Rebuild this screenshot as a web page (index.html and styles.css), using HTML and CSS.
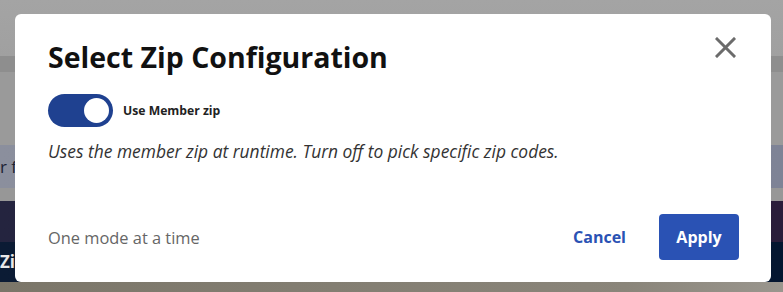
FILE: index.html
```html
<!DOCTYPE html>
<html lang="en">
<head>
    <meta charset="UTF-8">
    <meta name="viewport" content="width=device-width, initial-scale=1.0">
    <title>Select Zip Configuration</title>
    <link rel="stylesheet" href="styles.css">
</head>
<body>
    <div class="page">
        <div class="band band-top"></div>
        <div class="band band-bar"></div>
        <div class="band band-mid"></div>
        <div class="band band-filter"><span>r for zip</span></div>
        <div class="band band-gap"></div>
        <div class="band band-navy"></div>
        <div class="band band-deep"><span>Zip</span></div>
        <div class="band band-bottom"></div>
    </div>

    <div class="modal">
        <div class="modal-head">
            <h1>Select Zip Configuration</h1>
            <button class="close" aria-label="Close">
                <svg width="21" height="21" viewBox="0 0 21 21">
                    <path d="M2 2 L19 19 M19 2 L2 19" stroke="#6b6b6b" stroke-width="3" stroke-linecap="square"/>
                </svg>
            </button>
        </div>

        <div class="toggle-row">
            <span class="switch"><span class="knob"></span></span>
            <span class="toggle-label">Use Member zip</span>
        </div>
        <p class="hint">Uses the member zip at runtime. Turn off to pick specific zip codes.</p>

        <div class="modal-foot">
            <span class="note">One mode at a time</span>
            <div class="actions">
                <button class="btn-link">Cancel</button>
                <button class="btn-primary">Apply</button>
            </div>
        </div>
    </div>
</body>
</html>
```

FILE: styles.css
```css
html, body {
    margin: 0;
    padding: 0;
}
body {
    width: 783px;
    height: 292px;
    overflow: hidden;
    position: relative;
    font-family: "Open Sans", Arial, sans-serif;
}
.page {
    display: flex;
    flex-direction: column;
    height: 292px;
}
.band {
    flex: none;
    overflow: hidden;
    white-space: nowrap;
}
.band-top {
    height: 56px;
    background: linear-gradient(#a4a4a4, #a0a0a0);
}
.band-bar {
    height: 16px;
    background-color: #8e8e8e;
}
.band-mid {
    height: 73px;
    background-color: #9a9a9a;
}
.band-filter {
    height: 43px;
    background: linear-gradient(90deg, #8b8f9d, #7e8396);
    color: #1c2233;
    font-size: 17px;
    line-height: 43px;
}
.band-gap {
    height: 13px;
    background-color: #979797;
}
.band-navy {
    height: 41px;
    background: linear-gradient(90deg, #24243f, #2a1d3a);
}
.band-deep {
    height: 40px;
    background: linear-gradient(90deg, #0b1b34, #041630);
    color: #e8e8e8;
    font-size: 17px;
    font-weight: bold;
    line-height: 40px;
}
.band-bottom {
    height: 10px;
    background: linear-gradient(90deg, #7b7669, #8a857a 80%, #9a968e);
}

.modal {
    position: absolute;
    left: 15px;
    top: 14px;
    width: 756px;
    height: 268px;
    box-sizing: border-box;
    padding: 22px 32px 22px 33px;
    background-color: #fff;
    border-radius: 6px;
    display: flex;
    flex-direction: column;
}
.modal-head {
    display: flex;
    justify-content: space-between;
    align-items: flex-start;
}
h1 {
    margin: 2px 0 0;
    font-size: 28.5px;
    font-weight: 700;
    color: #111;
    line-height: 38px;
}
.close {
    background: none;
    border: none;
    padding: 0;
    margin: 1px 3px 0 0;
    cursor: pointer;
    line-height: 0;
}
.toggle-row {
    display: flex;
    align-items: center;
    gap: 10px;
    margin-top: 18px;
}
.switch {
    width: 65px;
    height: 33px;
    border-radius: 17px;
    background-color: #1f4190;
    position: relative;
    flex: none;
}
.knob {
    position: absolute;
    right: 4px;
    top: 4px;
    width: 25px;
    height: 25px;
    border-radius: 50%;
    background-color: #fff;
}
.toggle-label {
    font-size: 12.2px;
    font-weight: 700;
    color: #222;
}
.hint {
    margin: 12px 0 0;
    font-size: 17.4px;
    font-style: italic;
    color: #333;
}
.modal-foot {
    margin-top: auto;
    display: flex;
    justify-content: space-between;
    align-items: center;
}
.note {
    font-size: 16.4px;
    color: #666;
}
.actions {
    display: flex;
    align-items: center;
    gap: 33px;
}
.btn-link {
    background: none;
    border: none;
    padding: 0;
    font-family: "Open Sans", Arial, sans-serif;
    font-size: 16px;
    font-weight: 700;
    color: #2a52b4;
    cursor: pointer;
}
.btn-primary {
    background-color: #2a52b4;
    color: #fff;
    border: none;
    border-radius: 4px;
    width: 80px;
    height: 46px;
    font-family: "Open Sans", Arial, sans-serif;
    font-size: 16px;
    font-weight: 700;
    cursor: pointer;
}
```
